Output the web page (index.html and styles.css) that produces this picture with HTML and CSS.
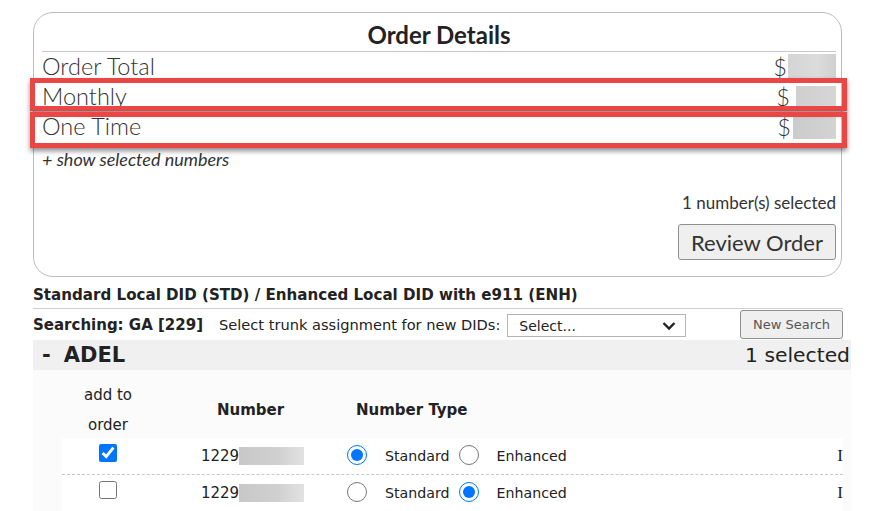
FILE: index.html
```html
<!DOCTYPE html>
<html lang="en">
<head>
<meta charset="utf-8">
<title>Order Details</title>
<link rel="stylesheet" href="styles.css">
</head>
<body>
<div class="page">
  <section class="order">
    <h2 class="order-title">Order Details</h2>
    <div class="sum-row"><span>Order Total</span><span class="amt">$<i class="blur b-total"></i></span></div>
    <div class="sum-row"><span>Monthly</span><span class="amt">$<i class="blur b-monthly"></i></span></div>
    <div class="sum-row"><span>One Time</span><span class="amt">$<i class="blur b-once"></i></span></div>
    <div class="show">+ show selected numbers</div>
    <div class="count">1 number(s) selected</div>
    <div class="review-wrap"><button class="review" type="button">Review Order</button></div>
    <div class="mark mark-monthly"></div>
    <div class="mark mark-once"></div>
  </section>

  <div class="products">
    <div class="prod-title">Standard Local DID (STD) / Enhanced Local DID with e911 (ENH)</div>
    <div class="search-bar">
      <b class="searching">Searching: GA [229]</b>
      <span class="trunk-label">Select trunk assignment for new DIDs:</span>
      <div class="select">Select...<svg class="chev" viewBox="0 0 14 10" width="14" height="10"><path d="M1.5 2 L7 7.5 L12.5 2" fill="none" stroke="#222" stroke-width="2.4"/></svg></div>
      <button class="new-search" type="button">New Search</button>
    </div>
    <div class="city-bar">
      <span class="city"><span class="dash">-</span>ADEL</span>
      <span class="sel-count">1 selected</span>
    </div>
    <div class="numbers">
      <div class="grid head">
        <div class="c1">add to<br>order</div>
        <div class="c2"><b>Number</b></div>
        <div class="c3"><b>Number Type</b></div>
        <div class="c4"></div>
      </div>
      <div class="grid row">
        <div class="c1"><input type="checkbox" class="chk" checked></div>
        <div class="c2">1229<i class="blur b-num"></i></div>
        <div class="c3"><input type="radio" class="rad" name="t1" checked><span class="lab">Standard</span><input type="radio" class="rad rad2" name="t1"><span class="lab">Enhanced</span></div>
        <div class="c4">I</div>
      </div>
      <div class="grid row">
        <div class="c1"><input type="checkbox" class="chk"></div>
        <div class="c2">1229<i class="blur b-num"></i></div>
        <div class="c3"><input type="radio" class="rad" name="t2"><span class="lab">Standard</span><input type="radio" class="rad rad2" name="t2" checked><span class="lab">Enhanced</span></div>
        <div class="c4">I</div>
      </div>
    </div>
  </div>
</div>
</body>
</html>
```

FILE: styles.css
```css
* { box-sizing: border-box; }
html, body { margin: 0; padding: 0; background: #fff; }
body { width: 880px; height: 511px; overflow: hidden; color: #222; }

.page { padding: 12px 0 0 33px; }

/* ---------- Order details card ---------- */
.order {
  position: relative;
  width: 809px;
  border: 1px solid #bdbdbd;
  border-radius: 20px;
  padding: 0 5px 16px 8px;
  font-family: Lato, "Open Sans", sans-serif;
  color: #333;
}
.order-title {
  margin: 0;
  padding-top: 6px;
  line-height: 32px;
  font-size: 24px;
  font-weight: 700;
  text-align: center;
  color: #222;
  border-bottom: 1px solid #c8c8c8;
}
.sum-row {
  display: flex;
  justify-content: space-between;
  align-items: center;
  height: 30px;
  padding-bottom: 3px;
  font-size: 23.5px;
  font-weight: 300;
  color: #333;
}
.amt { display: flex; align-items: center; margin-top: 3px; }
.blur {
  display: inline-block;
  background: linear-gradient(90deg, #d4d4d4, #dcdcdc 60%, #d0d0d0);
}
.b-total { width: 48px; height: 26px; margin-left: 1px; }
.b-monthly { width: 40px; height: 22px; margin-left: 6px; background: linear-gradient(90deg, #cfcfcf, #d6d6d6); }
.b-once { width: 43px; height: 23px; margin-left: 2px; background: linear-gradient(90deg, #cbcbcb, #d3d3d3); }

.show {
  margin-top: 4px;
  line-height: 26px;
  font-size: 18px;
  font-style: italic;
  color: #333;
}
.count {
  margin-top: 18px;
  line-height: 26px;
  font-size: 17px;
  text-align: right;
  color: #333;
}
.review-wrap { display: flex; justify-content: flex-end; margin-top: 8px; }
.review {
  height: 36px;
  padding: 0 12px;
  font-family: Lato, "Open Sans", sans-serif;
  font-size: 22px;
  color: #333;
  background: #efefef;
  border: 1px solid #8f8f8f;
  border-radius: 3px;
}

.mark {
  position: absolute;
  left: -4px;
  width: 817px;
  border: 5px solid #ea4646;
  box-shadow: 0 3px 5px rgba(0, 0, 0, 0.45);
}
.mark-monthly { top: 65px; height: 33px; }
.mark-once { top: 99px; height: 36px; }

/* ---------- Products ---------- */
.products {
  font-family: "DejaVu Sans", Verdana, sans-serif;
  font-size: 14px;
  color: #222;
}
.prod-title {
  width: 810px;
  padding-top: 5px;
  line-height: 26px;
  font-weight: 700;
  font-size: 15.1px;
  border-bottom: 1px solid #cfcfcf;
}
.search-bar {
  width: 810px;
  height: 31px;
  display: flex;
  align-items: center;
}
.searching { font-weight: 700; font-size: 15px; }
.trunk-label { margin-left: 16px; font-size: 14.6px; }
.select {
  margin-left: 7px;
  width: 179px;
  height: 23px;
  border: 1px solid #b5b5b5;
  display: flex;
  align-items: center;
  justify-content: space-between;
  padding: 0 9px 0 11px;
  font-size: 14px;
  margin-top: 2px;
}
.chev { display: block; }
.new-search {
  margin-left: auto;
  width: 103px;
  height: 29px;
  padding: 0;
  font-family: "DejaVu Sans", Verdana, sans-serif;
  font-size: 13px;
  color: #555;
  background: #efefef;
  border: 1px solid #8f8f8f;
  border-radius: 3px;
}
.city-bar {
  width: 818px;
  height: 30px;
  background: #f0f0f0;
  display: flex;
  align-items: center;
  justify-content: space-between;
  padding: 0 1px 0 9px;
  font-size: 21px;
}
.city { font-weight: 700; }
.dash { margin-right: 13px; }
.sel-count { font-weight: 400; font-size: 20.3px; }

.numbers { width: 818px; background: #fbfbfb; padding-left: 29px; }
.grid {
  display: grid;
  grid-template-columns: 92px 193px 1fr 40px;
  width: 781px;
}
.head { height: 68px; padding-top: 10px; line-height: 30px; font-size: 15px; }
.head .c1 { text-align: center; }
.head .c2 { text-align: center; align-self: center; }
.head .c3 { padding-left: 9px; align-self: center; }
.row {
  height: 37px;
  background: #fff;
  border-bottom: 1px dashed #c8c8c8;
  align-items: center;
  font-size: 14.2px;
}
.row .c1 { display: flex; justify-content: center; }
.row .c2 { display: flex; justify-content: center; align-items: center; padding-left: 4px; font-size: 15px; }
.row .c3 { display: flex; align-items: center; }
.row .c4 { text-align: right; font-family: "Liberation Serif", serif; font-size: 17px; }
.chk { width: 18px; height: 18px; margin: 0 0 6px 0; accent-color: #0075ff; }
.rad { width: 20px; height: 20px; margin: 0 0 3px 0; accent-color: #0075ff; }
.rad2 { margin-left: 9px; }
.lab { margin-left: 18px; }
.b-num { width: 65px; height: 18px; background: linear-gradient(90deg, #c8c8c8, #d0d0d0 60%, #e2e2e2); }
```
